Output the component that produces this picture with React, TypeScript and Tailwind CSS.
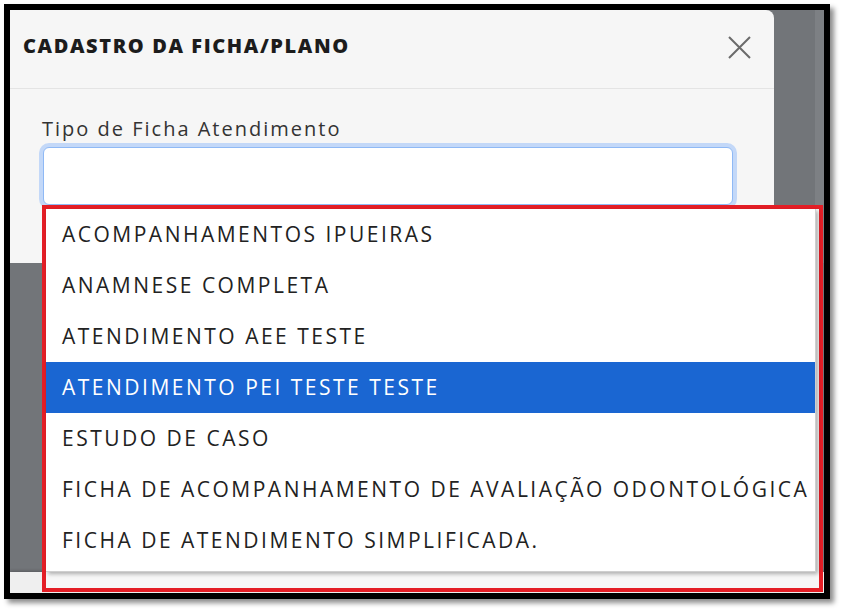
import React from "react";

const options = [
  "ACOMPANHAMENTOS IPUEIRAS",
  "ANAMNESE COMPLETA",
  "ATENDIMENTO AEE TESTE",
  "ATENDIMENTO PEI TESTE TESTE",
  "ESTUDO DE CASO",
  "FICHA DE ACOMPANHAMENTO DE AVALIAÇÃO ODONTOLÓGICA",
  "FICHA DE ATENDIMENTO SIMPLIFICADA.",
];

const selected = 3;

export default function App() {
  return (
    <div className="w-[843px] h-[612px] bg-white pt-[4px] pl-[4px] font-['Open_Sans',sans-serif]">
      {/* screenshot frame */}
      <div className="w-[826px] h-[595px] border-[6px] border-black shadow-[4px_4px_5px_rgba(0,0,0,0.45)]">
        <div className="relative w-full h-full flex flex-col bg-[#727579]">
          {/* modal row */}
          <div className="flex h-[253px]">
            <div className="w-[764px] bg-[#f6f6f6] rounded-tr-[8px] flex flex-col">
              <div className="h-[79px] flex items-center justify-between pl-[13px] pr-[23px] pb-[6px] border-b border-[#e4e4e4]">
                <h1 className="text-[20px] font-extrabold text-[#1c1c1c] tracking-[1.6px]">
                  CADASTRO DA FICHA/PLANO
                </h1>
                <button type="button" className="mt-[2px] text-[#6b6b6b]">
                  <svg width="23" height="23" viewBox="0 0 23 23" fill="none">
                    <path d="M1 1L22 22M22 1L1 22" stroke="currentColor" strokeWidth="2" />
                  </svg>
                </button>
              </div>
              <div className="pl-[32px] pt-[28px]">
                <label className="block text-[20px] leading-[24px] text-[#333] tracking-[2px]">
                  Tipo de Ficha Atendimento
                </label>
                <div className="mt-[6px] ml-[1px] w-[690px] h-[58px] bg-white border border-[#8fb9f5] rounded-[6px] shadow-[0_0_0_4px_#c3d8f8]" />
              </div>
            </div>
            <div className="flex-1 flex justify-end">
              <div className="w-[9px] bg-[#7d8084]" />
            </div>
          </div>
          <div className="flex-1" />
          <div className="h-[21px] bg-[#efefef] shadow-[0_-1px_3px_rgba(0,0,0,0.25)]" />

          {/* open select list (annotated in red) */}
          <div className="absolute left-[32px] top-[195px] w-[781px] h-[387px] border-[4px] border-[#e41e26] bg-[#f7f7f7]">
            <ul className="w-[770px] h-[363px] bg-white border-r border-b border-[#cfcfcf] shadow-[2px_2px_4px_rgba(0,0,0,0.3)]">
              {options.map((o, i) => (
                <li
                  key={o}
                  className={
                    i === selected
                      ? "h-[51px] pl-[16px] flex items-center text-[21px] tracking-[2.5px] whitespace-nowrap bg-[#1a66d2] text-white"
                      : "h-[51px] pl-[16px] flex items-center text-[21px] tracking-[2.5px] whitespace-nowrap text-[#222]"
                  }
                >
                  {o}
                </li>
              ))}
            </ul>
          </div>
        </div>
      </div>
    </div>
  );
}
